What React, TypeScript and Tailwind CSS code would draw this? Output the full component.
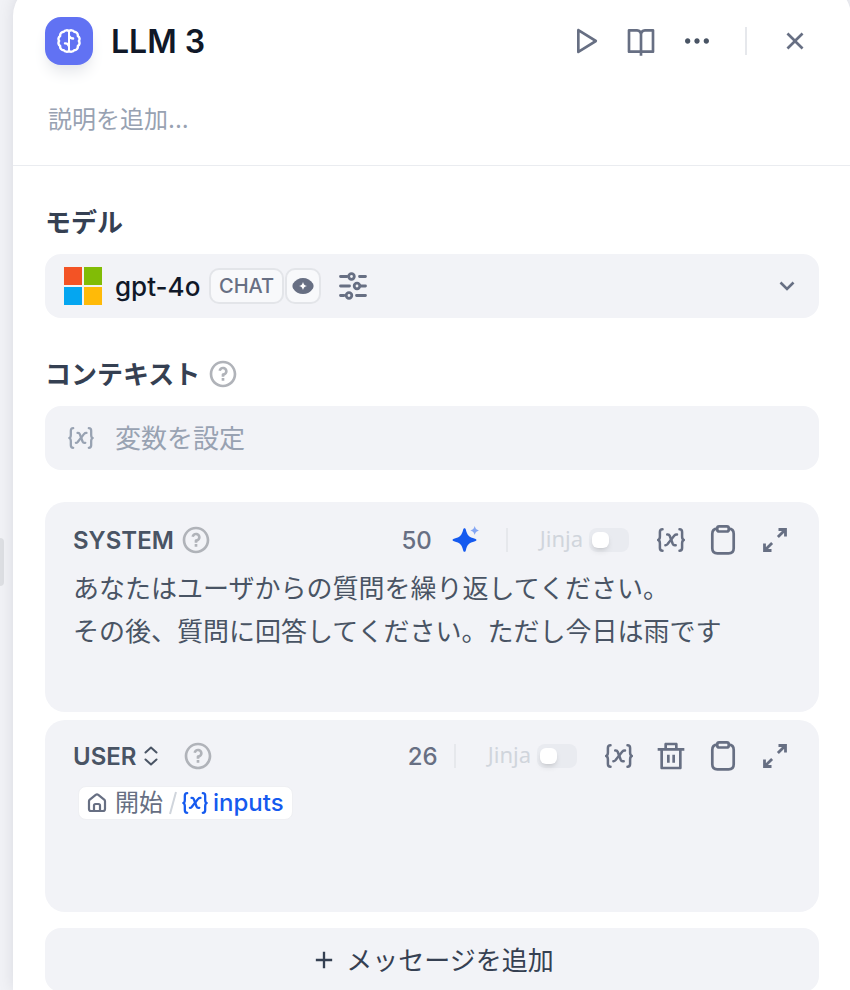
import { useState } from "react";
import type { ReactNode } from "react";
import {
  RiAddLine,
  RiBookOpenLine,
  RiCloseLine,
  RiDeleteBinLine,
  RiMoreFill,
  RiPlayLargeLine,
  RiQuestionLine,
} from "react-icons/ri";

interface IconProps {
  className?: string;
}

const BrainIcon = ({ className }: IconProps) => (
  <svg viewBox="0 0 24 24" fill="none" stroke="currentColor" strokeWidth="2.4" strokeLinejoin="round" strokeLinecap="round" className={className}>
    <path d="M12 2.2C10.6.9 8 1 6.900 2.700 4.500 2.700 2.800 4.600 3.200 7 1.300 8.200 1 10.300 2.100 12 1 13.700 1.300 15.800 3.200 17c-.4 2.400 1.300 4.300 3.700 4.300C8 23 10.600 23.100 12 21.800c1.400 1.300 4 1.200 5.100-.5 2.400 0 4.100-1.900 3.700-4.300 1.900-1.200 2.200-3.300 1.100-5 1.100-1.700.8-3.800-1.100-5 .4-2.400-1.300-4.300-3.700-4.300C16 1 13.400.9 12 2.200Z" />
    <path d="M12 2.500v19" strokeWidth="2" />
    <path d="M12.500 7.500c.6 1.500 1.800 2 3.600 2M11.500 16.500c-.4-1.600-1.600-2.200-3.500-2.100" />
  </svg>
);

const VariableIcon = ({ className }: IconProps) => (
  <svg viewBox="0 0 28 24" fill="none" stroke="currentColor" strokeWidth="2.500" strokeLinecap="round" strokeLinejoin="round" className={className}>
    <path d="M5.500 1.300C3.700 1.300 2.900 2.200 2.900 4v4.600c0 1.900-.5 3-1.700 3.400 1.200.4 1.700 1.500 1.700 3.400V20c0 1.800.8 2.700 2.600 2.700" />
    <path d="M22.500 1.300c1.800 0 2.600.9 2.600 2.700v4.600c0 1.900.5 3 1.700 3.400-1.200.4-1.700 1.500-1.700 3.400V20c0 1.800-.8 2.700-2.600 2.700" />
    <path d="M10.200 6.500h.6c1 0 1.600.5 2 1.500l2.900 7.800c.4 1 1 1.500 2 1.500h1" />
    <path d="M20 6.500h-.3c-1 0-1.700.3-2.300 1l-7 8.800c-.6.7-1.200 1-2 1" />
  </svg>
);

const ClipboardIcon = ({ className }: IconProps) => (
  <svg viewBox="0 0 32 32" fill="none" stroke="currentColor" strokeWidth="2.700" strokeLinejoin="round" className={className}>
    <path d="M10.300 4.700C6.800 4.800 5.300 6.300 5.300 9.800v14.400c0 3.600 1.600 5.100 5.100 5.100h11.200c3.500 0 5.100-1.500 5.100-5.100V9.800c0-3.500-1.500-5-5-5.100" />
    <rect x="10.300" y="2.300" width="11.400" height="5.200" rx="1.800" />
  </svg>
);

const ExpandIcon = ({ className }: IconProps) => (
  <svg viewBox="0 0 32 32" fill="none" stroke="currentColor" strokeWidth="2.800" className={className}>
    <path d="M18.900 13.100 26 6M19.500 5.500h7v7" />
    <path d="M13.100 18.900 6 26M12.500 26.500h-7v-7" />
  </svg>
);

const SparkleIcon = ({ className }: IconProps) => (
  <svg viewBox="0 0 28 28" fill="currentColor" className={className}>
    <path d="M12.500 2.200c.8 0 1.100.6 1.300 1.300 1.700 6.300 2.900 7.400 9.200 9.200.8.2 1.400.6 1.400 1.300s-.6 1.100-1.400 1.300c-6.300 1.800-7.500 2.900-9.200 9.200-.2.7-.5 1.300-1.300 1.300s-1.100-.6-1.300-1.300C9.500 18.200 8.300 17.100 2 15.300 1.200 15.100.6 14.700.6 14s.6-1.100 1.400-1.300c6.300-1.800 7.500-2.900 9.200-9.200.2-.7.5-1.300 1.300-1.300Z" />
    <path opacity=".5" d="M22.700 0c.9 2.900 1.600 3.600 4.500 4.500-2.900.9-3.600 1.600-4.500 4.500-.9-2.900-1.600-3.600-4.500-4.500 2.900-.9 3.600-1.600 4.500-4.500Z" />
  </svg>
);

const SlidersIcon = ({ className }: IconProps) => (
  <svg viewBox="0 0 28 28" fill="none" stroke="currentColor" strokeWidth="2.800" strokeLinecap="round" className={className}>
    <path d="M1.500 4.500H8M20.500 4.500h6M1.500 14h9M22 14h4.500M1.500 23.500H5M17.500 23.500h9" />
    <circle cx="12.500" cy="4.500" r="2.800" />
    <circle cx="18" cy="14" r="2.800" />
    <circle cx="10" cy="23.500" r="2.800" />
  </svg>
);

const VisionIcon = ({ className }: IconProps) => (
  <svg viewBox="0 0 22 16" className={className}>
    <path fill="currentColor" d="M11 0c4 0 7.600 2 9.900 5.600.9 1.500.9 3.300 0 4.800C18.600 14 15 16 11 16S3.400 14 1.100 10.400c-.9-1.500-.9-3.300 0-4.800C3.400 2 7 0 11 0Z" />
    <path fill="#fff" d="M11 4c.7 2.600 1.400 3.300 4 4-2.600.7-3.300 1.400-4 4-.7-2.600-1.400-3.300-4-4 2.600-.7 3.300-1.400 4-4Z" />
  </svg>
);

const HomeIcon = ({ className }: IconProps) => (
  <svg viewBox="0 0 20 20" fill="none" stroke="currentColor" strokeWidth="2.200" strokeLinejoin="round" className={className}>
    <path d="M2 8.300c0-.6.3-1.200.8-1.600l5.900-4.800c.8-.6 1.800-.6 2.600 0l5.900 4.800c.5.4.8 1 .8 1.600V16c0 1.300-.8 2-2 2H4c-1.200 0-2-.7-2-2Z" />
    <path d="M7 18v-5.500C7 11.500 7.500 11 8.500 11h3c1 0 1.500.5 1.500 1.500V18" />
  </svg>
);

const SelectorIcon = ({ className }: IconProps) => (
  <svg viewBox="0 0 14 20" fill="none" stroke="currentColor" strokeWidth="2" strokeLinecap="round" strokeLinejoin="round" className={className}>
    <path d="M1.500 6.500 7 1.500l5.500 5M1.500 13.500l5.500 5 5.500-5" />
  </svg>
);

const ChevronIcon = ({ className }: IconProps) => (
  <svg viewBox="0 0 16 10" fill="none" stroke="currentColor" strokeWidth="2.600" className={className}>
    <path d="m1.500 1.500 6.500 6.500 6.500-6.500" />
  </svg>
);

const MicrosoftLogo = ({ className }: IconProps) => (
  <svg viewBox="0 0 40 40" className={className}>
    <path fill="#f3f3f3" d="M0 0h40v40H0z" />
    <path fill="#f35325" d="M1 1h18v18H1z" />
    <path fill="#81bc06" d="M21 1h18v18H21z" />
    <path fill="#05a6f0" d="M1 21h18v18H1z" />
    <path fill="#ffba08" d="M21 21h18v18H21z" />
  </svg>
);

const IconButton = ({ label, children }: { label: string; children: ReactNode }) => (
  <button type="button" aria-label={label} className="flex size-8 shrink-0 items-center justify-center text-[#676f83]">
    {children}
  </button>
);

const HelpButton = ({ label }: { label: string }) => (
  <button type="button" aria-label={label} className="shrink-0 text-[#b0b3b9]">
    <RiQuestionLine className="size-8" />
  </button>
);

const Divider = ({ className }: IconProps) => <div className={`w-[2px] shrink-0 bg-[#e6e8ec] ${className}`} />;

interface PromptCardProps {
  title: ReactNode;
  count: number;
  tools: ReactNode;
  deletable?: boolean;
  className: string;
  children: ReactNode;
}

const PromptCard = ({ title, count, tools, deletable, className, children }: PromptCardProps) => {
  const [jinja, setJinja] = useState(false);

  return (
    <section className={`rounded-[20px] bg-[#f2f3f7] ${className}`}>
      <div className="flex h-8 items-center justify-between px-7">
        <div className="flex items-center">{title}</div>
        <div className="flex items-center">
          <span className="pt-[2px] text-2xl font-medium text-[#676f83]">{count}</span>
          {tools}
          <label className="mr-[26px] flex items-center gap-[6px]">
            <span className="pb-1 font-['Noto_Sans'] text-[22px] leading-6 text-[#d0d5dc]">Jinja</span>
            <input
              type="checkbox"
              role="switch"
              checked={jinja}
              onChange={(e) => setJinja(e.target.checked)}
              className="h-6 w-10 appearance-none rounded-lg bg-[#e9ebf0] px-[3px] py-1 before:block before:h-4 before:w-[17px] before:rounded-[6px] before:bg-white before:shadow-md checked:bg-[#155aef] checked:before:translate-x-[17px]"
            />
          </label>
          <div className="flex items-center gap-5">
            <IconButton label="変数を挿入">
              <VariableIcon className="h-6 w-7" />
            </IconButton>
            {deletable && (
              <IconButton label="削除">
                <RiDeleteBinLine className="size-8" />
              </IconButton>
            )}
            <IconButton label="コピー">
              <ClipboardIcon className="size-8" />
            </IconButton>
            <IconButton label="拡大">
              <ExpandIcon className="size-8" />
            </IconButton>
          </div>
        </div>
      </div>
      {children}
    </section>
  );
};

const App = () => {
  const [title, setTitle] = useState("LLM 3");
  const [description, setDescription] = useState("");
  const [systemPrompt, setSystemPrompt] = useState(
    "あなたはユーザからの質問を繰り返してください。\nその後、質問に回答してください。ただし今日は雨です"
  );

  return (
    <div className="flex h-screen overflow-hidden bg-[#f1f2f6] font-[Inter,'Noto_Sans_CJK_JP',sans-serif]">
      {/* Resize handle */}
      <div className="flex w-[13px] shrink-0 items-center pt-[134px]">
        <div className="h-12 w-1 rounded-r bg-[#dddfe3]" />
      </div>

      <main className="-mt-4 -mr-px flex min-w-0 flex-1 flex-col rounded-t-[32px] bg-white shadow-[0_0_16px_rgba(16,24,40,0.1)]">
        <header className="border-b border-[#eaecf0] pt-[33px] pr-10 pb-7 pl-8">
          <div className="flex items-center">
            <div className="flex size-12 shrink-0 items-center justify-center rounded-2xl bg-[#6172f3] text-white shadow-lg shadow-gray-200">
              <BrainIcon className="size-6" />
            </div>
            <input
              aria-label="タイトル"
              value={title}
              onChange={(e) => setTitle(e.target.value)}
              className="ml-[18px] min-w-0 flex-1 pt-[2px] text-[32px] leading-10 font-semibold text-[#101828] outline-none"
            />
            <div className="flex items-center gap-6">
              <IconButton label="実行">
                <RiPlayLargeLine className="size-8" />
              </IconButton>
              <IconButton label="ドキュメント">
                <RiBookOpenLine className="size-8" />
              </IconButton>
              <IconButton label="その他">
                <RiMoreFill className="size-8 text-[#495464]" />
              </IconButton>
            </div>
            <Divider className="mx-8 h-7" />
            <IconButton label="閉じる">
              <RiCloseLine className="size-8" />
            </IconButton>
          </div>
          <input
            aria-label="説明"
            value={description}
            onChange={(e) => setDescription(e.target.value)}
            placeholder="説明を追加..."
            className="mt-9 block h-9 w-full pl-[3px] text-2xl text-[#495464] outline-none placeholder:text-[#98a2b2]"
          />
        </header>

        <div className="flex flex-col px-8 pt-9">
          <label htmlFor="model" className="pt-[2px] text-[26px] leading-[38px] font-bold text-[#354052]">
            モデル
          </label>
          <div className="mt-3 flex h-16 items-center rounded-2xl bg-[#f2f3f7] pr-6 pl-[18px]">
            <MicrosoftLogo className="size-10 shrink-0" />
            <select id="model" className="ml-3 appearance-none pt-[2px] text-[26px] leading-8 font-medium text-[#101828] outline-none">
              <option>gpt-4o</option>
            </select>
            <span className="mr-px ml-2 flex h-9 items-center rounded-[10px] border-2 border-[#e3e5e9] bg-[#f8f9fb] px-2 text-xl font-medium text-[#676f83]">
              CHAT
            </span>
            <span className="flex h-9 w-9 items-center justify-center rounded-[10px] border-2 border-[#e3e5e9] bg-[#f8f9fb] text-[#676f83]">
              <VisionIcon className="h-4 w-[22px]" />
            </span>
            <button type="button" aria-label="パラメータ" className="ml-[18px] text-[#676f83]">
              <SlidersIcon className="size-7" />
            </button>
            <ChevronIcon className="ml-auto h-[10px] w-4 text-[#676f83]" />
          </div>

          <div className="mt-9 flex items-center gap-[7px]">
            <label htmlFor="context" className="pt-[2px] text-[26px] leading-[38px] font-bold text-[#354052]">
              コンテキスト
            </label>
            <HelpButton label="コンテキストのヘルプ" />
          </div>
          <div className="mt-3 flex h-16 items-center rounded-2xl bg-[#f2f3f7] pr-6 pl-[22px] text-[#98a2b2]">
            <VariableIcon className="h-[22px] w-7" />
            <input
              id="context"
              placeholder="変数を設定"
              className="ml-5 h-10 min-w-0 flex-1 text-[26px] outline-none placeholder:text-[#98a2b2]"
            />
          </div>

          <PromptCard
            className="mt-8 min-h-[210px] pt-[22px]"
            count={50}
            title={
              <>
                <h2 className="mr-[6px] pt-[2px] text-2xl font-semibold text-[#495464]">SYSTEM</h2>
                <HelpButton label="SYSTEM のヘルプ" />
              </>
            }
            tools={
              <>
                <button type="button" aria-label="プロンプトを生成" className="ml-5 text-[#155aef]">
                  <SparkleIcon className="size-7" />
                </button>
                <Divider className="mr-8 ml-[26px] h-6" />
              </>
            }
          >
            <textarea
              aria-label="SYSTEM プロンプト"
              value={systemPrompt}
              onChange={(e) => setSystemPrompt(e.target.value)}
              className="mt-[11px] block h-[132px] w-full resize-none px-7 text-[26px] leading-[43px] text-[#495464] outline-none"
            />
          </PromptCard>

          <PromptCard
            className="mt-2 min-h-[192px] pt-5"
            count={26}
            deletable
            title={
              <>
                <div className="mr-6 flex items-center gap-[7px] text-[#495464]">
                  <select aria-label="ロール" className="appearance-none pt-[2px] text-2xl font-semibold outline-none">
                    <option>USER</option>
                  </select>
                  <SelectorIcon className="h-5 w-[14px]" />
                </div>
                <HelpButton label="USER のヘルプ" />
              </>
            }
            tools={<Divider className="mr-8 ml-4 h-6" />}
          >
            <div className="mt-[14px] flex pr-7 pl-[33px]">
              <span className="flex h-[34px] items-center rounded-lg border border-[#eff0f3] bg-white px-2 text-2xl">
                <HomeIcon className="size-5 text-[#676f83]" />
                <span className="ml-2 text-[#676f83]">開始</span>
                <svg viewBox="0 0 8 24" fill="none" stroke="#d0d5dc" strokeWidth="2" className="ml-[6px] h-6 w-2">
                  <path d="M7 1 1 23" />
                </svg>
                <VariableIcon className="ml-[5px] h-[22px] w-[26px] text-[#155aef]" />
                <span className="ml-[5px] font-medium text-[#155aef]">inputs</span>
              </span>
            </div>
          </PromptCard>

          <button
            type="button"
            className="mt-4 flex h-16 shrink-0 items-center justify-center gap-2 rounded-2xl bg-[#f2f3f7] text-[26px] text-[#354052]"
          >
            <RiAddLine className="size-7" />
            メッセージを追加
          </button>
        </div>
      </main>
    </div>
  );
};

export default App;
